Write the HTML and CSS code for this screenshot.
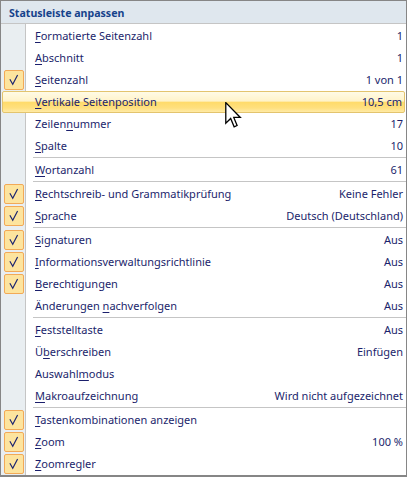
FILE: index.html
```html
<!DOCTYPE html>
<html lang="de">
<head>
<meta charset="utf-8">
<title>Statusleiste anpassen</title>
<link rel="stylesheet" href="styles.css">
</head>
<body>
<div class="menu">
  <div class="title">Statusleiste anpassen</div>
  <div class="items">
    <div class="item"><span class="gut"></span><span class="label"><u>F</u>ormatierte Seitenzahl</span><span class="value">1</span></div>
    <div class="item"><span class="gut"></span><span class="label"><u>A</u>bschnitt</span><span class="value">1</span></div>
    <div class="item"><span class="gut"><span class="check"><svg viewBox="0 0 20 20"><path d="M5.4 9.2 L8.6 14.8 L14 4.4"/></svg></span></span><span class="label"><u>S</u>eitenzahl</span><span class="value">1 von 1</span></div>
    <div class="item hot"><span class="gut"></span><span class="label"><u>V</u>ertikale Seitenposition</span><span class="value">10,5 cm</span></div>
    <div class="item"><span class="gut"></span><span class="label">Zeilen<u>n</u>ummer</span><span class="value">17</span></div>
    <div class="item"><span class="gut"></span><span class="label"><u>S</u>palte</span><span class="value">10</span></div>
    <div class="sep"></div>
    <div class="item"><span class="gut"></span><span class="label"><u>W</u>ortanzahl</span><span class="value">61</span></div>
    <div class="sep"></div>
    <div class="item"><span class="gut"><span class="check"><svg viewBox="0 0 20 20"><path d="M5.4 9.2 L8.6 14.8 L14 4.4"/></svg></span></span><span class="label"><u>R</u>echtschreib- und Grammatikprüfung</span><span class="value">Keine Fehler</span></div>
    <div class="item"><span class="gut"><span class="check"><svg viewBox="0 0 20 20"><path d="M5.4 9.2 L8.6 14.8 L14 4.4"/></svg></span></span><span class="label"><u>S</u>prache</span><span class="value">Deutsch (Deutschland)</span></div>
    <div class="sep"></div>
    <div class="item"><span class="gut"><span class="check"><svg viewBox="0 0 20 20"><path d="M5.4 9.2 L8.6 14.8 L14 4.4"/></svg></span></span><span class="label"><u>S</u>ignaturen</span><span class="value">Aus</span></div>
    <div class="item"><span class="gut"><span class="check"><svg viewBox="0 0 20 20"><path d="M5.4 9.2 L8.6 14.8 L14 4.4"/></svg></span></span><span class="label"><u>I</u>nformationsverwaltungsrichtlinie</span><span class="value">Aus</span></div>
    <div class="item"><span class="gut"><span class="check"><svg viewBox="0 0 20 20"><path d="M5.4 9.2 L8.6 14.8 L14 4.4"/></svg></span></span><span class="label"><u>B</u>erechtigungen</span><span class="value">Aus</span></div>
    <div class="item"><span class="gut"></span><span class="label">Änderungen <u>n</u>achverfolgen</span><span class="value">Aus</span></div>
    <div class="sep"></div>
    <div class="item"><span class="gut"></span><span class="label"><u>F</u>eststelltaste</span><span class="value">Aus</span></div>
    <div class="item"><span class="gut"></span><span class="label">Ü<u>b</u>erschreiben</span><span class="value">Einfügen</span></div>
    <div class="item"><span class="gut"></span><span class="label">Auswahl<u>m</u>odus</span><span class="value"></span></div>
    <div class="item"><span class="gut"></span><span class="label"><u>M</u>akroaufzeichnung</span><span class="value">Wird nicht aufgezeichnet</span></div>
    <div class="sep"></div>
    <div class="item"><span class="gut"><span class="check"><svg viewBox="0 0 20 20"><path d="M5.4 9.2 L8.6 14.8 L14 4.4"/></svg></span></span><span class="label"><u>T</u>astenkombinationen anzeigen</span><span class="value"></span></div>
    <div class="item"><span class="gut"><span class="check"><svg viewBox="0 0 20 20"><path d="M5.4 9.2 L8.6 14.8 L14 4.4"/></svg></span></span><span class="label"><u>Z</u>oom</span><span class="value">100 %</span></div>
    <div class="item"><span class="gut"><span class="check"><svg viewBox="0 0 20 20"><path d="M5.4 9.2 L8.6 14.8 L14 4.4"/></svg></span></span><span class="label"><u>Z</u>oomregler</span><span class="value"></span></div>
  </div>
  <svg class="cursor" viewBox="0 0 13 21" width="17" height="27"><path d="M0.5 0.5 L0.5 16.5 L4.3 12.8 L7 19.3 L9.3 18.3 L6.7 12 L11.8 12 Z"/></svg>
</div>
</body>
</html>
```
FILE: styles.css
```css
html, body {
  margin: 0;
  padding: 0;
  background: #ffffff;
}
body {
  font-family: "Noto Sans", "Open Sans", sans-serif;
  font-size: 11px;
  color: #1b1f6c;
}
.menu {
  position: relative;
  width: 407px;
  height: 477px;
  box-sizing: border-box;
  border: 1px solid #868686;
  border-bottom-width: 2px;
  background: #ffffff;
  overflow: hidden;
}
.title {
  height: 20px;
  padding-top: 2px;
  line-height: 20px;
  padding-left: 8px;
  background: #dfe7ee;
  border-bottom: 1px solid #c5c5c5;
  color: #15428b;
  font-weight: bold;
  font-size: 10.6px;
}
.items {
  padding-top: 1px;
  background: linear-gradient(to right, #e9eef1 0, #e9eef1 24px, #c5c5c5 24px, #c5c5c5 25px, #ffffff 25px);
}
.item {
  display: flex;
  align-items: center;
  height: 22px;
  box-sizing: border-box;
  padding-right: 3px;
  padding-bottom: 1px;
  white-space: nowrap;
}
.gut {
  width: 34px;
  flex: 0 0 34px;
  display: flex;
  align-items: center;
  height: 21px;
}
.check {
  margin-left: 3px;
  margin-top: 1px;
  width: 20px;
  height: 20px;
  box-sizing: border-box;
  border: 1px solid #f2a957;
  border-radius: 2px;
  background: #fde49e;
  display: flex;
}
.check svg {
  width: 18px;
  height: 18px;
}
.check path {
  fill: none;
  stroke: #1c2570;
  stroke-width: 1.3;
  stroke-linejoin: miter;
}
.label {
  flex: 1 1 auto;
}
.label u {
  text-decoration: underline;
  text-underline-offset: 2px;
}
.value {
  flex: 0 0 auto;
  text-align: right;
}
.item.hot {
  margin: 0 1px;
  padding-right: 2px;
  border: 1px solid #e3c46e;
  border-radius: 2px;
  background: linear-gradient(#fffbe6 0%, #fff3c9 45%, #ffdb6b 52%, #ffe07f 80%, #ffeaa6 100%);
}
.item.hot .gut {
  width: 32px;
  flex-basis: 32px;
}
.sep {
  height: 2px;
  margin-left: 32px;
  border-top: 1px solid #c5c5c5;
  box-sizing: border-box;
}
.cursor {
  position: absolute;
  left: 224px;
  top: 101px;
}
.cursor path {
  fill: #ffffff;
  stroke: #000000;
  stroke-width: 1;
  stroke-linejoin: miter;
}
```
